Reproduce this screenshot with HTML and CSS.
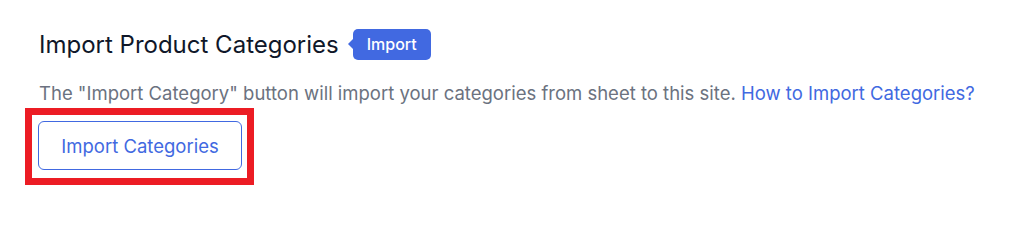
FILE: index.html
```html
<!DOCTYPE html>
<html lang="en">
<head>
<meta charset="utf-8">
<link rel="stylesheet" href="styles.css">
</head>
<body>
<section class="panel">
  <div class="head">
    <h2 class="title">Import Product Categories</h2>
    <span class="badge">Import</span>
  </div>
  <p class="desc">The "Import Category" button will import your categories from sheet to this site. <a class="link" href="#">How to Import Categories?</a></p>
  <div class="highlight">
    <button class="btn" type="button">Import Categories</button>
  </div>
</section>
</body>
</html>
```
FILE: styles.css
```css
html, body {
  margin: 0;
  padding: 0;
  background: #ffffff;
}
body {
  font-family: "Inter", "Noto Sans", sans-serif;
}
.panel {
  padding: 29px 0 0 39px;
}
.head {
  display: flex;
  align-items: center;
  height: 31px;
}
.title {
  margin: 0;
  font-size: 24px;
  font-weight: 400;
  color: #0f1729;
  line-height: 31px;
}
.badge {
  position: relative;
  margin-left: 14px;
  height: 31px;
  padding: 0 14px;
  background: #4169e1;
  color: #ffffff;
  font-size: 16px;
  font-weight: 500;
  line-height: 31px;
  border-radius: 5px;
}
.badge::before {
  content: "";
  position: absolute;
  left: -5px;
  top: 10px;
  border-top: 5px solid transparent;
  border-bottom: 5px solid transparent;
  border-right: 5px solid #4169e1;
}
.desc {
  margin: 21px 0 0 0;
  font-size: 18.5px;
  line-height: 24px;
  color: #6b7280;
}
.link {
  color: #4169e1;
  text-decoration: none;
}
.highlight {
  display: inline-block;
  margin: 3px 0 0 -14px;
  border: 7px solid #ec1c24;
  padding: 6px 5px 8px 6px;
}
.btn {
  display: block;
  width: 204px;
  height: 49px;
  background: #ffffff;
  border: 1px solid #4169e1;
  border-radius: 6px;
  color: #4169e1;
  font-family: "Inter", "Noto Sans", sans-serif;
  font-size: 18.5px;
  font-weight: 400;
  cursor: pointer;
}
```
